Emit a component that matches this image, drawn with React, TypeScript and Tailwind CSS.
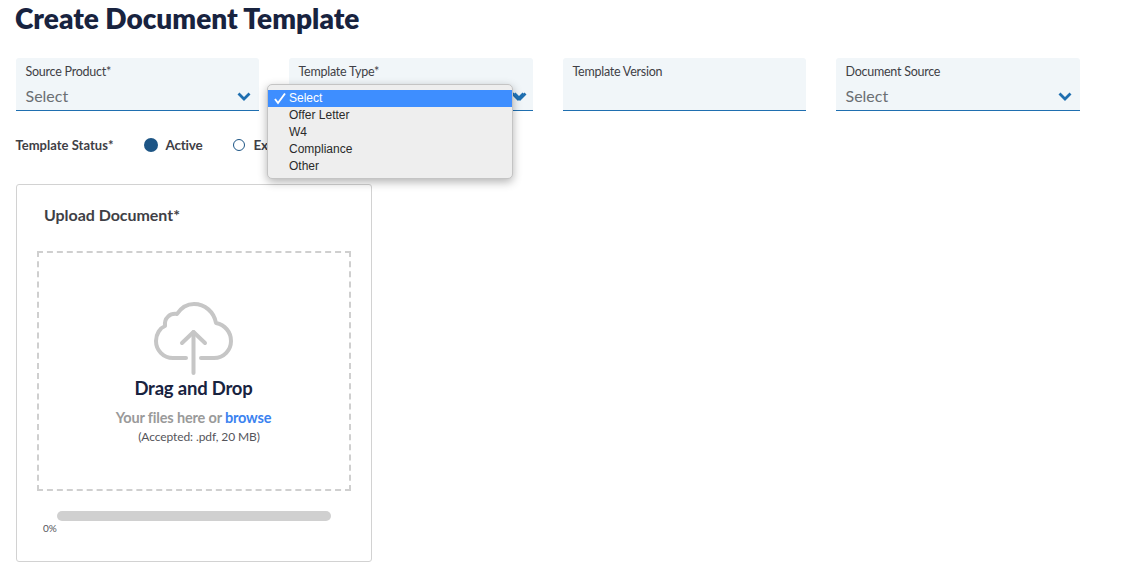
const Chevron = () => (
  <svg width="14" height="9" viewBox="0 0 14 9" className="shrink-0">
    <path d="M1.5 1.5 L7 7 L12.5 1.5" fill="none" stroke="#1f6fb0" strokeWidth="2.8" />
  </svg>
);

function Field({ label, value, chevron = true }: { label: string; value?: string; chevron?: boolean }) {
  return (
    <div className="w-full h-[53px] bg-[#f1f6f9] rounded-t-[3px] border-b-[1.5px] border-[#1f6fb0] pl-[9.5px] pr-[8px] pt-[6px]">
      <div className="text-[12.5px] tracking-[-0.25px] leading-[16px] text-[#3f3f46]">{label}</div>
      {value && (
        <div className="flex items-center justify-between mt-[6px] h-[20px]">
          <span className="text-[16px] leading-[20px] text-[#6b6f73]">{value}</span>
          {chevron && <Chevron />}
        </div>
      )}
    </div>
  );
}

const options = ["Offer Letter", "W4", "Compliance", "Other"];

export default function App() {
  return (
    <div className="relative w-[1148px] h-[575px] overflow-hidden bg-white pl-[16px] font-['Lato','Noto_Sans',sans-serif]">
      <h1 className="text-[28px] leading-[38px] font-extrabold text-[#18233f] -ml-[1px] -mt-[1px]">Create Document Template</h1>

      <div className="grid grid-cols-[243px_244px_243px_244px] gap-x-[30px] mt-[21px]">
        <Field label="Source Product*" value="Select" />
        <Field label="Template Type*" value=" " />
        <Field label="Template Version" />
        <Field label="Document Source" value="Select" />
      </div>

      <div className="flex items-center h-[20px] mt-[24px] text-[13.5px] tracking-[-0.2px] font-bold text-[#3f3f46]">
        <span className="w-[128px] text-[13px] tracking-[0.02px] pt-[1.5px] -ml-[0.5px]">Template Status*</span>
        <span className="w-[13.5px] h-[13.5px] rounded-full bg-[#1d5585] ml-[0.5px]" />
        <span className="ml-[8px] w-[68px]">Active</span>
        <span className="w-[12px] h-[12px] rounded-full border border-[#1d5585] bg-white -ml-[1px]" />
        <span className="ml-[9px]">Expired</span>
      </div>

      <div className="w-[356px] h-[378px] mt-[29px] border border-[#d2d2d2] rounded-[3px] pl-[20px] pt-[19px]">
        <div className="pl-[7px] text-[16px] tracking-[-0.04px] leading-[21px] font-bold text-[#3f3f46]">Upload Document*</div>
        <div className="mt-[26px] w-[314px] h-[240px] border-2 border-dashed border-[#cfcfcf] flex flex-col items-center pt-[47px]">
          <svg width="82" height="76" viewBox="0 0 82 76" fill="none" stroke="#c6c6c6" strokeWidth="4" strokeLinecap="round" strokeLinejoin="round">
            <path d="M33 58 H20 C10 58 3 50 3 41 C3 34 7 28 12 26 C11 18 17 13 24 14 C28 8 33 4 41 4 C52 4 61 12 63 23 C72 25 78 32 78 41 C78 50 71 58 61 58 H48" />
            <path d="M40.5 73 V32" />
            <path d="M29 43 L40.5 32 L52 43" />
          </svg>
          <div className="mt-[0px] -ml-[1px] text-[18.5px] tracking-[-0.2px] leading-[24px] font-bold text-[#18233f]">Drag and Drop</div>
          <div className="mt-[8px] -ml-[1px] text-[14.5px] tracking-[-0.17px] leading-[20px] font-bold text-[#9a9a9a]">
            Your files here or <span className="text-[#3b82f0]">browse</span>
          </div>
          <div className="mt-[1px] pl-[10px] text-[12px] tracking-[-0.1px] leading-[16px] text-[#55555b]">(Accepted: .pdf, 20 MB)</div>
        </div>
        <div className="ml-[20px] mt-[20px] w-[274px] h-[10px] rounded-full bg-[#d0d0d0]" />
        <div className="ml-[6px] mt-[1px] text-[10px] leading-[12px] text-[#55555b]">0%</div>
      </div>

      <div className="absolute left-[267px] top-[84px] w-[246px] h-[95px] rounded-[5px] bg-[#eeeeee] border border-[#c4c4c4] shadow-[0_3px_10px_rgba(0,0,0,0.3)] pt-[5px] font-['Liberation_Sans',sans-serif] text-[12px] text-[#2a2a2a]">
        <div className="relative h-[17px] leading-[17px] pl-[21px] bg-[#3e8eff] text-white">
          <svg width="14" height="13" viewBox="0 0 14 13" className="absolute left-[5px] top-[2px]">
            <path d="M2 7 L5 11 L12 1.5" fill="none" stroke="#ffffff" strokeWidth="1.9" />
          </svg>
          Select
        </div>
        {options.map((o) => (
          <div key={o} className="h-[17px] leading-[17px] pl-[21px]">{o}</div>
        ))}
      </div>

      <div className="absolute left-[513px] top-[92px]">
        <Chevron />
      </div>
    </div>
  );
}
